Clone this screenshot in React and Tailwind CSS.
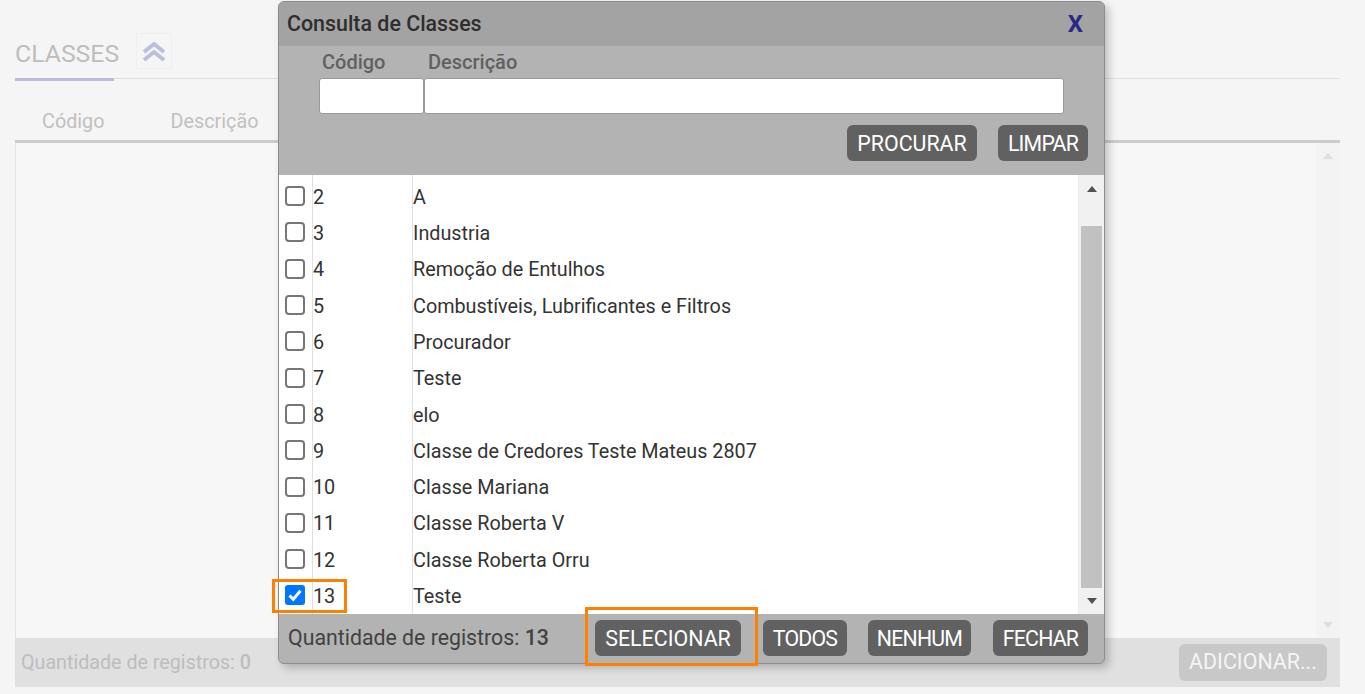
const rows = [
  [2, "A"], [3, "Industria"], [4, "Remoção de Entulhos"], [5, "Combustíveis, Lubrificantes e Filtros"],
  [6, "Procurador"], [7, "Teste"], [8, "elo"], [9, "Classe de Credores Teste Mateus 2807"],
  [10, "Classe Mariana"], [11, "Classe Roberta V"], [12, "Classe Roberta Orru"], [13, "Teste"],
];

function Btn({ children, className = "" }) {
  return (
    <span className={"flex h-9 items-center justify-center rounded-[6px] bg-[#616161] pt-[2px] text-white " + className}>
      {children}
    </span>
  );
}

function Box({ checked }) {
  if (checked) {
    return (
      <span className="flex h-[20px] w-[20px] items-center justify-center rounded-[3px] bg-[#0075ff]">
        <svg width="16" height="16" viewBox="0 0 16 16" fill="none">
          <path d="M2.5 8.5 L6.3 12.2 L13.5 3.8" stroke="white" strokeWidth="3" />
        </svg>
      </span>
    );
  }
  return <span className="block h-[20px] w-[20px] rounded-[4px] border-2 border-[#767676] bg-white" />;
}

export default function App() {
  return (
    <div className="relative h-[694px] w-[1365px] overflow-hidden bg-[#f5f5f5] font-['Roboto',sans-serif]">
      {/* Background page */}
      <div className="flex h-full flex-col pl-[15px] pr-[25px] pt-[33px]">
        <div className="flex h-[46px] items-start border-b border-[#e0e0e0]">
          <div className="flex h-[48px] w-[99px] items-start border-b-[3px] border-[#bcbbd8]">
            <span className="mt-[6px] text-[24.8px] leading-[30px] text-[#bdbdbd]">CLASSES</span>
          </div>
          <span className="ml-[22px] flex h-[36px] w-[36px] items-center justify-center border border-[#eeeeee]">
            <svg width="28" height="28" viewBox="0 0 28 28" fill="none" stroke="#bcbfdc" strokeWidth="4">
              <path d="M4 15 L14 7 L24 15" />
              <path d="M4 23 L14 15 L24 23" />
            </svg>
          </span>
        </div>
        <div className="flex h-[64px] items-end border-b-[3px] border-[#cccccc] pb-[6px] text-[19.8px] leading-[24px] text-[#c2bfbf]">
          <span className="ml-[27px]">Código</span>
          <span className="ml-[66px]">Descrição</span>
        </div>
        <div className="flex h-[495px] justify-between border-l border-[#e4e4e4] bg-[#f7f7f7]">
          <span />
          <div className="flex w-[24px] flex-col items-center justify-between bg-[#f3f3f3] pb-[10px] pt-[10px]">
            <span className="h-0 w-0 border-x-[5px] border-b-[6px] border-x-transparent border-b-[#dedede]" />
            <span className="h-0 w-0 border-x-[5px] border-t-[6px] border-x-transparent border-t-[#dedede]" />
          </div>
        </div>
        <div className="flex h-[49px] items-center justify-between bg-[#e0e0e0] pl-[6px] pr-[13px] text-[19.7px] text-[#bdbdbd]">
          <span>Quantidade de registros: <span className="font-medium">0</span></span>
          <span className="flex h-[37px] w-[148px] items-center justify-center rounded-[6px] bg-[#c8c8c8] text-[21.4px] text-[#f5f5f5]">ADICIONAR...</span>
        </div>
      </div>

      {/* Modal */}
      <div className="absolute left-[278px] top-[1px] flex h-[663px] w-[827px] flex-col overflow-hidden rounded-[6px] border border-[#8c8c8c] bg-[#b3b3b3] shadow-[4px_4px_8px_rgba(0,0,0,0.22)]">
        <div className="flex h-[44px] shrink-0 items-center justify-between bg-[#a3a3a3] pl-[8px] pr-[21px]">
          <span className="text-[21.4px] font-medium text-[#2e2e2e]">Consulta de Classes</span>
          <span className="text-[24px] font-bold leading-none text-[#29298a]">X</span>
        </div>
        <div className="flex h-[129px] shrink-0 flex-col">
          <div className="flex pl-[40px] pt-[4px]">
            <div className="flex w-[105px] flex-col">
              <span className="pl-[3px] text-[20px] font-medium leading-[24px] text-[#616161]">Código</span>
              <span className="mt-[4px] block h-[36px] rounded-[3px] border border-[#9a9a9a] bg-white" />
            </div>
            <div className="flex w-[640px] flex-col">
              <span className="pl-[4px] text-[20px] font-medium leading-[24px] text-[#616161]">Descrição</span>
              <span className="mt-[4px] block h-[36px] rounded-[3px] border border-[#9a9a9a] bg-white" />
            </div>
          </div>
          <div className="mt-[11px] flex justify-end gap-[21px] pr-[16px]">
            <Btn className="w-[130px] text-[21.4px]">PROCURAR</Btn>
            <Btn className="w-[90px] text-[21.3px] tracking-[-0.8px]">LIMPAR</Btn>
          </div>
        </div>
        <div className="flex h-[439px] shrink-0 overflow-hidden bg-white">
          <div className="flex-1">
            {rows.map(([code, desc]) => {
              const pad = code === 2 ? "pt-[4.5px]" : "";
              return (
                <div key={code} className={"flex items-center text-[19.8px] text-[#333333] " + (code === 2 ? "h-[40.8px]" : "h-[36.3px]")}>
                  <span className={"flex h-full w-[34px] shrink-0 items-center justify-center border-r border-[#e0e0e0] pb-[3px] pr-[2px] " + pad}>
                    <Box checked={code === 13} />
                  </span>
                  <span className={"flex h-full w-[100px] shrink-0 items-center border-r border-[#e0e0e0] " + pad}>{code}</span>
                  <span className={pad}>{desc}</span>
                </div>
              );
            })}
          </div>
          <div className="flex w-[26px] flex-col items-center border-l border-[#ececec] bg-[#f1f1f1]">
            <span className="mt-[11px] h-0 w-0 border-x-[5.5px] border-b-[6px] border-x-transparent border-b-[#505050]" />
            <span className="mt-[34px] h-[362px] w-[21px] bg-[#c1c1c1]" />
            <span className="mt-[10px] h-0 w-0 border-x-[5.5px] border-t-[6px] border-x-transparent border-t-[#505050]" />
          </div>
        </div>
        <div className="flex flex-1 items-center justify-between pb-[1px] pl-[9px] pr-[16px]">
          <span className="text-[21.3px] text-[#424242]">Quantidade de registros: <span className="font-medium">13</span></span>
          <div className="flex items-center">
            <Btn className="w-[146px] text-[21.4px]">SELECIONAR</Btn>
            <Btn className="ml-[22px] w-[84px] text-[21.3px] tracking-[-0.8px]">TODOS</Btn>
            <Btn className="ml-[21px] w-[103px] text-[21.3px] tracking-[-0.8px]">NENHUM</Btn>
            <Btn className="ml-[22px] w-[95px] text-[21.3px] tracking-[-0.8px]">FECHAR</Btn>
          </div>
        </div>
      </div>

      {/* Highlights */}
      <span className="absolute left-[272px] top-[579px] h-[34px] w-[75px] border-[3px] border-[#ff8000]" />
      <span className="absolute left-[585px] top-[607px] h-[59px] w-[173px] border-[3px] border-[#ff8000]" />
    </div>
  );
}
